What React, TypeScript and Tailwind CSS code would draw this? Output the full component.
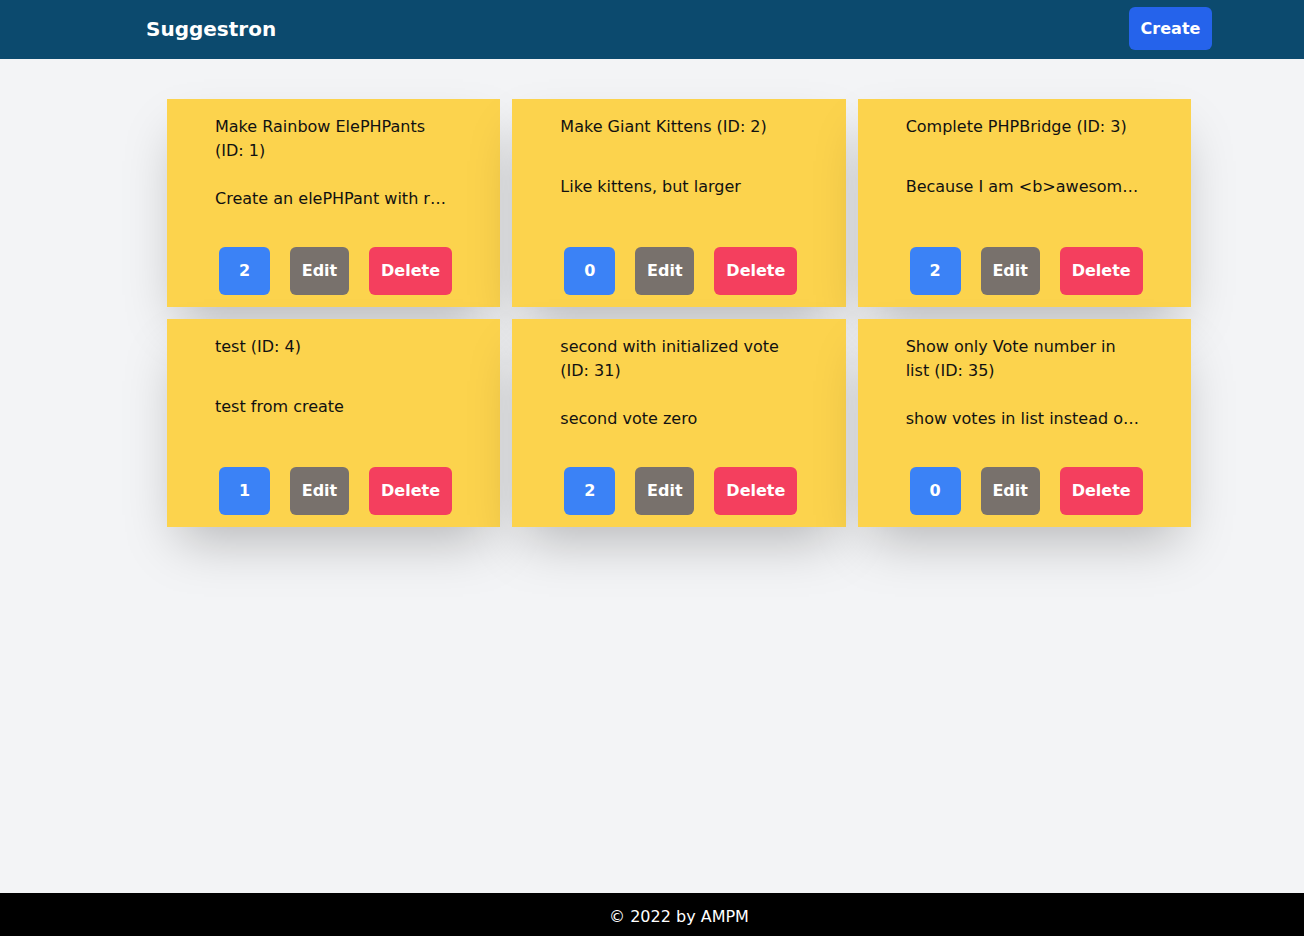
import React from "react";

type Item = { id: number; title: string; desc: string; votes: number };

const items: Item[] = [
  { id: 1, title: "Make Rainbow ElePHPants", desc: "Create an elePHPant with rainbow colors", votes: 2 },
  { id: 2, title: "Make Giant Kittens", desc: "Like kittens, but larger", votes: 0 },
  { id: 3, title: "Complete PHPBridge", desc: "Because I am <b>awesome</b>", votes: 2 },
  { id: 4, title: "test", desc: "test from create", votes: 1 },
  { id: 31, title: "second with initialized vote", desc: "second vote zero", votes: 2 },
  { id: 35, title: "Show only Vote number in list", desc: "show votes in list instead of details", votes: 0 },
];

function Card({ item }: { item: Item }) {
  return (
    <div className="flex h-[208px] flex-col bg-[#fcd34d] pt-4 pb-3 shadow-2xl">
      <div className="px-12 text-base leading-6 text-[#111]">
        {item.title} (ID: {item.id})
      </div>
      <div className="flex flex-1 items-center px-12 pt-[2px]">
        <div className="w-full truncate text-base leading-6 text-[#111]">{item.desc}</div>
      </div>
      <div className="mt-[14px] flex gap-5 pl-[52px]">
        <button className="h-12 w-[51px] rounded-md bg-[#3b82f6] text-base font-bold text-white">
          {item.votes}
        </button>
        <button className="h-12 w-[59px] rounded-md bg-[#78716c] text-base font-bold text-white">
          Edit
        </button>
        <button className="h-12 w-[83px] rounded-md bg-[#f43f5e] text-base font-bold text-white">
          Delete
        </button>
      </div>
    </div>
  );
}

export default function App() {
  return (
    <div
      className="flex min-h-screen flex-col bg-[#f3f4f6]"
      style={{ fontFamily: '"DejaVu Sans", sans-serif' }}
    >
      <header className="flex h-[59px] items-center justify-between bg-[#0c4a6e] pb-[2px] pl-[146px] pr-[92px]">
        <div className="text-xl font-bold text-white">Suggestron</div>
        <button className="h-[43px] w-[83px] rounded-md bg-[#2563eb] text-base font-bold text-white">
          Create
        </button>
      </header>
      <main className="flex-1 pt-10">
        <div className="ml-[167px] grid w-[1024px] grid-cols-3 gap-3">
          {items.map((it) => (
            <Card key={it.id} item={it} />
          ))}
        </div>
      </main>
      <footer className="flex h-[43px] items-start justify-center bg-black pl-[54px] pt-3 text-base leading-6 text-white">
        © 2022 by AMPM
      </footer>
    </div>
  );
}
